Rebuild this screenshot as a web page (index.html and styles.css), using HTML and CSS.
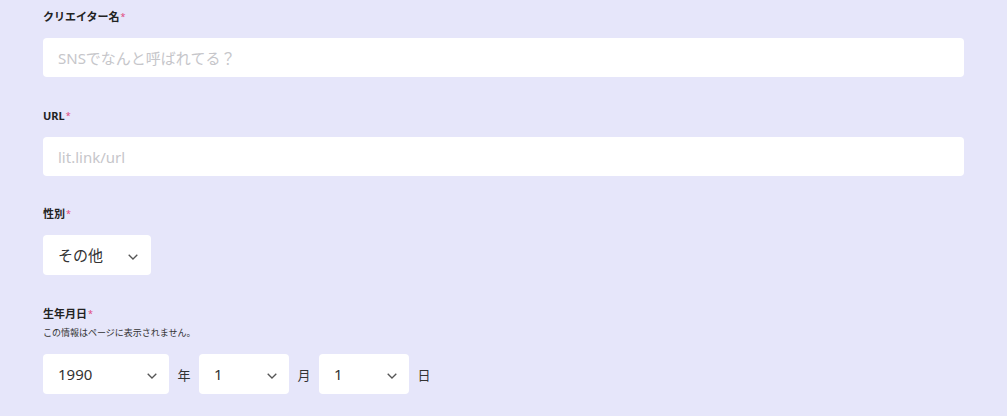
FILE: index.html
```html
<!DOCTYPE html>
<html lang="ja">
<head>
<meta charset="utf-8">
<title>プロフィール</title>
<link rel="stylesheet" href="styles.css">
</head>
<body>
<form class="form">
  <div class="field">
    <label class="label">クリエイター名<span class="req">*</span></label>
    <input class="input" type="text" placeholder="SNSでなんと呼ばれてる？">
  </div>
  <div class="field">
    <label class="label">URL<span class="req">*</span></label>
    <input class="input" type="text" placeholder="lit.link/url">
  </div>
  <div class="field field-gender">
    <label class="label">性別<span class="req">*</span></label>
    <div class="select select-gender">
      <span class="value">その他</span>
      <svg class="chev" width="10" height="6" viewBox="0 0 10 6"><path d="M0.7 0.7 L5 5 L9.3 0.7" fill="none" stroke="#555" stroke-width="1.3"/></svg>
    </div>
  </div>
  <div class="field">
    <label class="label label-tight">生年月日<span class="req">*</span></label>
    <p class="note">この情報はページに表示されません。</p>
    <div class="date-row">
      <div class="select select-year">
        <span class="value">1990</span>
        <svg class="chev" width="10" height="6" viewBox="0 0 10 6"><path d="M0.7 0.7 L5 5 L9.3 0.7" fill="none" stroke="#555" stroke-width="1.3"/></svg>
      </div>
      <span class="unit">年</span>
      <div class="select select-small">
        <span class="value">1</span>
        <svg class="chev" width="10" height="6" viewBox="0 0 10 6"><path d="M0.7 0.7 L5 5 L9.3 0.7" fill="none" stroke="#555" stroke-width="1.3"/></svg>
      </div>
      <span class="unit">月</span>
      <div class="select select-small">
        <span class="value">1</span>
        <svg class="chev" width="10" height="6" viewBox="0 0 10 6"><path d="M0.7 0.7 L5 5 L9.3 0.7" fill="none" stroke="#555" stroke-width="1.3"/></svg>
      </div>
      <span class="unit">日</span>
    </div>
  </div>
</form>
</body>
</html>
```

FILE: styles.css
```css
* { box-sizing: border-box; }
html, body {
  margin: 0;
  background: #e6e6fa;
}
body {
  font-family: "Noto Sans", "Noto Sans CJK JP", sans-serif;
  color: #333;
  padding: 9px 43px 0 43px;
}
.form {
  display: flex;
  flex-direction: column;
  gap: 31px;
}
.field {
  display: flex;
  flex-direction: column;
  align-items: flex-start;
}
.field-gender { margin-top: -1px; }
.label {
  font-size: 11px;
  line-height: 16px;
  font-weight: 700;
  color: #222;
  margin-bottom: 13px;
}
.label-tight { margin-bottom: 4px; }
.req {
  color: #e0467c;
  font-weight: 400;
  font-size: 9px;
  vertical-align: top;
  margin-left: 1px;
}
.note {
  margin: 0 0 14px 0;
  font-size: 9px;
  line-height: 14px;
  color: #333;
}
.input {
  width: 100%;
  height: 39px;
  border: none;
  border-radius: 4px;
  background: #fff;
  padding: 0 15px;
  font-family: inherit;
  font-size: 15px;
  color: #333;
  outline: none;
}
.input::placeholder { color: #c6c6ca; }
.select {
  height: 40px;
  background: #fff;
  border-radius: 4px;
  display: flex;
  align-items: center;
  justify-content: space-between;
  padding: 0 12px 0 15px;
  font-size: 15px;
}
.select .value { line-height: 20px; }
.chev { margin-top: 4px; flex: none; }
.select-gender { width: 108px; padding-right: 13px; font-size: 15px; }
.select-year { width: 126px; }
.select-small { width: 90px; }
.date-row {
  display: flex;
  align-items: center;
  gap: 8px;
}
.unit {
  font-size: 13px;
  color: #333;
  width: 14px;
  text-align: center;
}
```
